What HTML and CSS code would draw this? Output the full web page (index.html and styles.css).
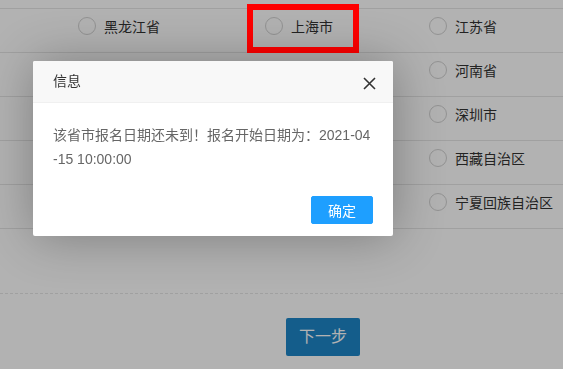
FILE: index.html
```html
<!DOCTYPE html>
<html lang="zh-CN">
<head>
<meta charset="utf-8">
<title>选择省市</title>
<link rel="stylesheet" href="styles.css">
</head>
<body>
<div class="page">
  <div class="list">
    <div class="row">
      <label class="opt"><span class="radio"></span>黑龙江省</label>
      <label class="opt"><span class="radio"></span>上海市</label>
      <label class="opt"><span class="radio"></span>江苏省</label>
    </div>
    <div class="row">
      <span class="cell"></span>
      <span class="cell"></span>
      <label class="opt"><span class="radio"></span>河南省</label>
    </div>
    <div class="row">
      <span class="cell"></span>
      <span class="cell"></span>
      <label class="opt"><span class="radio"></span>深圳市</label>
    </div>
    <div class="row">
      <span class="cell"></span>
      <span class="cell"></span>
      <label class="opt"><span class="radio"></span>西藏自治区</label>
    </div>
    <div class="row">
      <span class="cell"></span>
      <span class="cell"></span>
      <label class="opt"><span class="radio"></span>宁夏回族自治区</label>
    </div>
  </div>
  <div class="footer">
    <button class="next-btn" type="button">下一步</button>
  </div>
</div>

<div class="shade"></div>

<div class="mark"></div>

<div class="dialog">
  <div class="dialog-title">信息</div>
  <button class="dialog-close" type="button" aria-label="关闭">
    <svg width="13" height="13" viewBox="0 0 13 13"><path d="M1 1 L12 12 M12 1 L1 12" stroke="#333" stroke-width="1.6" fill="none"/></svg>
  </button>
  <div class="dialog-content">该省市报名日期还未到！报名开始日期为：2021-04<br>-15 10:00:00</div>
  <div class="dialog-btns"><button class="ok-btn" type="button">确定</button></div>
</div>
</body>
</html>
```

FILE: styles.css
```css
html, body {
  margin: 0;
  padding: 0;
  background: #fff;
  font-family: "Liberation Sans", "Noto Sans CJK SC", sans-serif;
}

.page {
  padding-top: 8px;
}

.list {
  border-bottom: 1px solid #e6e6e6;
}

.row {
  display: grid;
  grid-template-columns: 187px 164px 1fr;
  box-sizing: border-box;
  height: 44px;
  padding: 8px 0 0 78px;
  border-top: 1px solid #e6e6e6;
}

.opt {
  display: flex;
  align-items: center;
  gap: 8px;
  height: 18px;
  font-size: 14px;
  color: #333;
  white-space: nowrap;
}

.radio {
  width: 18px;
  height: 18px;
  box-sizing: border-box;
  border: 1px solid #d2d2d2;
  border-radius: 50%;
  flex: none;
}

.footer {
  margin-top: 64px;
  border-top: 1px dashed #e6e6e6;
  padding: 24px 0 0 286px;
}

.next-btn {
  height: 38px;
  padding: 0 13px;
  border: none;
  border-radius: 2px;
  background: #1e86c8;
  color: #fff;
  font-family: inherit;
  font-size: 16px;
  line-height: 38px;
}

.shade {
  position: fixed;
  inset: 0;
  background: rgba(0, 0, 0, 0.3);
  z-index: 10;
}

.mark {
  position: absolute;
  left: 247px;
  top: 4px;
  width: 112px;
  height: 49px;
  box-sizing: border-box;
  border: 6px solid #ff0000;
  z-index: 20;
}

.dialog {
  position: fixed;
  left: 33px;
  top: 61px;
  width: 360px;
  background: #fff;
  border-radius: 2px;
  box-shadow: 1px 1px 50px rgba(0, 0, 0, 0.3);
  z-index: 30;
}

.dialog-title {
  height: 41px;
  line-height: 41px;
  padding: 0 80px 0 20px;
  border-bottom: 1px solid #f0f0f0;
  background: #f8f8f8;
  border-radius: 2px 2px 0 0;
  color: #333;
  font-size: 14px;
}

.dialog-close {
  position: absolute;
  right: 17px;
  top: 16px;
  width: 13px;
  height: 13px;
  padding: 0;
  border: none;
  background: none;
  display: block;
}

.dialog-close svg {
  display: block;
}

.dialog-content {
  padding: 20px;
  line-height: 24px;
  font-size: 14px;
  color: #666;
  white-space: nowrap;
}

.dialog-btns {
  padding: 0 15px 12px;
  text-align: right;
  font-size: 0;
}

.ok-btn {
  height: 28px;
  line-height: 28px;
  margin: 5px 5px 0;
  padding: 0 16px;
  border: 1px solid #1e9fff;
  border-radius: 2px;
  background: #1e9fff;
  color: #fff;
  font-family: inherit;
  font-size: 14px;
}
```
